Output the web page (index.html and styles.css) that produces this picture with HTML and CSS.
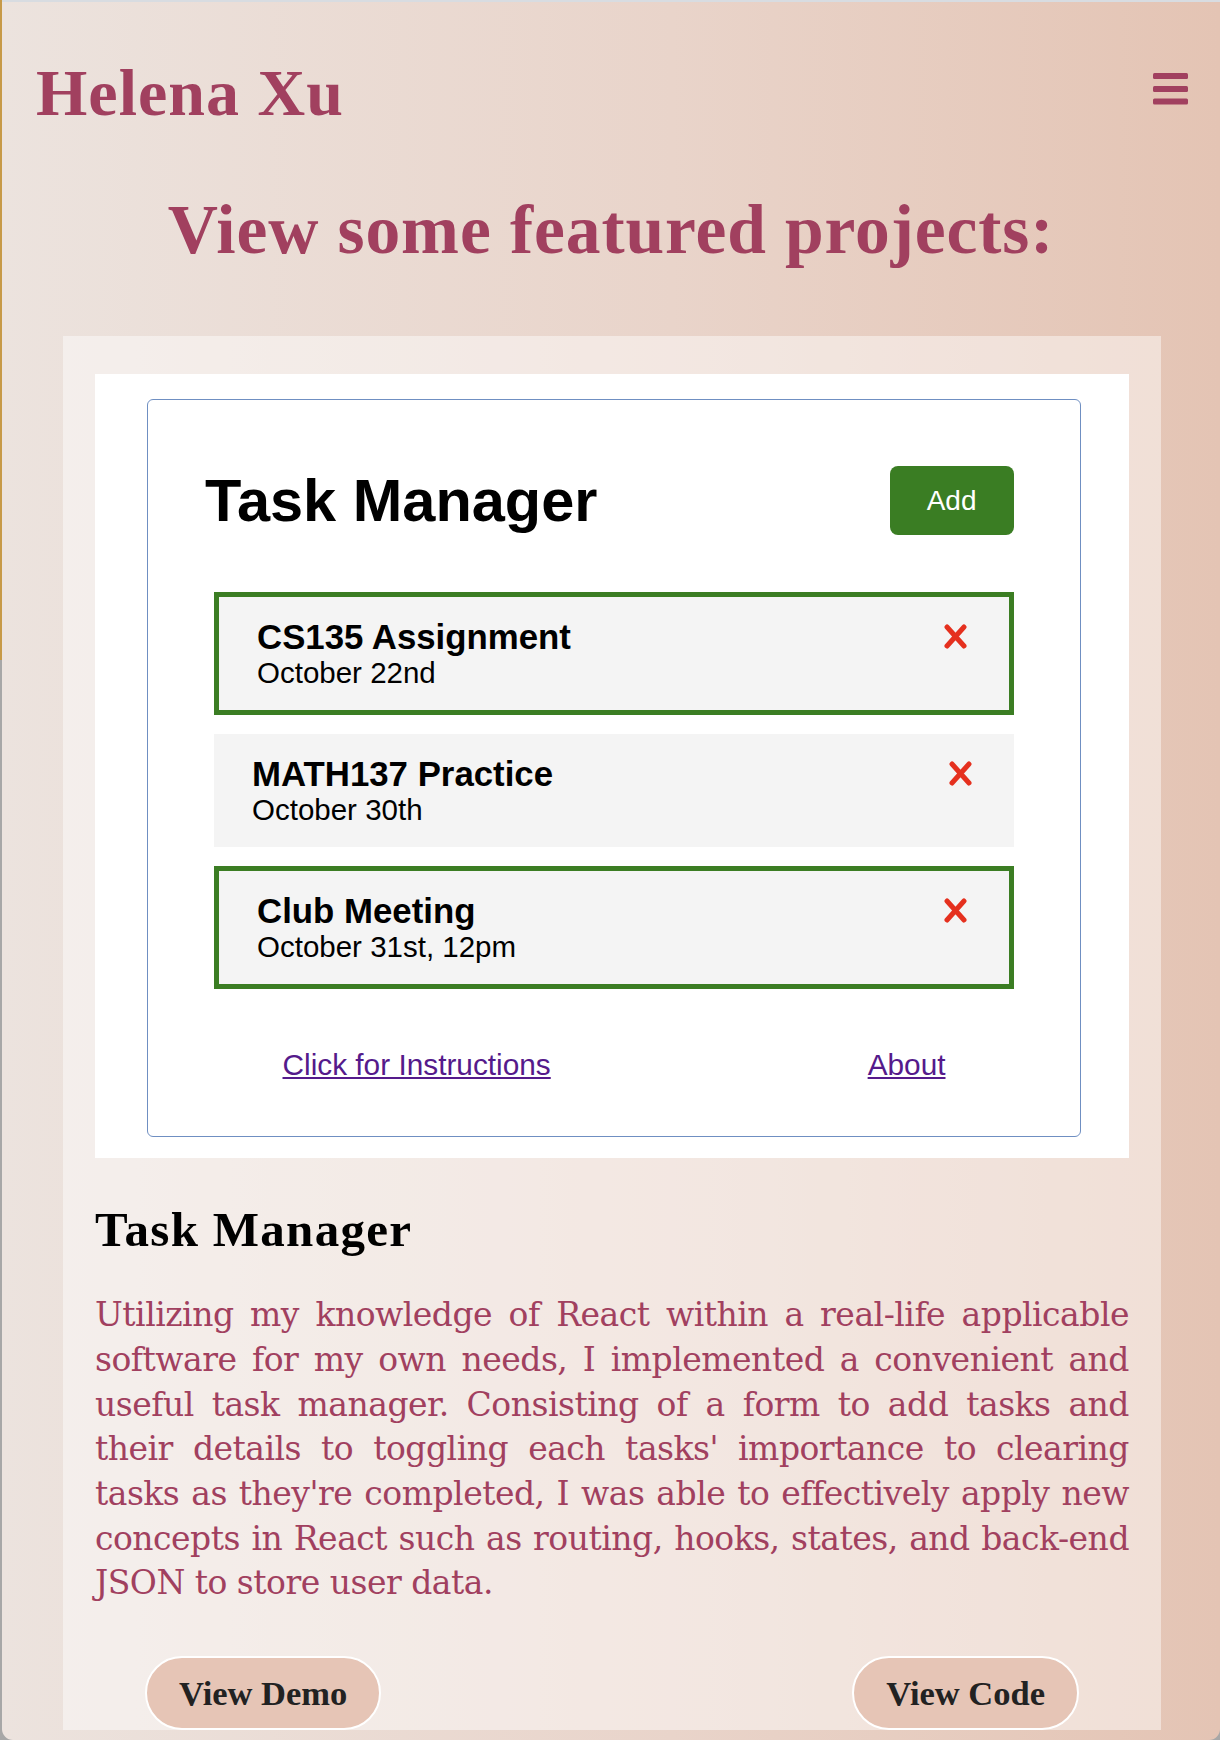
FILE: index.html
```html
<!DOCTYPE html>
<html lang="en">
<head>
<meta charset="utf-8">
<title>Helena Xu</title>
<link rel="stylesheet" href="styles.css">
</head>
<body>
<div class="window">
  <header class="site-header">
    <h1 class="logo">Helena Xu</h1>
    <button class="menu-btn" aria-label="Menu">
      <svg width="35" height="32" viewBox="0 0 35 32"><rect x="0" y="0" width="35" height="6" rx="1.5"/><rect x="0" y="13" width="35" height="6" rx="1.5"/><rect x="0" y="25.5" width="35" height="6" rx="1.5"/></svg>
    </button>
  </header>
  <main>
    <h2 class="section-title">View some featured projects:</h2>
    <article class="project-card">
      <div class="preview">
        <div class="tm-app">
          <div class="tm-header">
            <h3 class="tm-title">Task Manager</h3>
            <button class="tm-add">Add</button>
          </div>
          <ul class="tm-list">
            <li class="tm-task tm-task--reminder">
              <div class="tm-task-text"><div class="tm-task-title">CS135 Assignment</div><div class="tm-task-date">October 22nd</div></div>
              <svg class="tm-del" width="23" height="25" viewBox="0 0 23 25"><path d="M3 3L20 22M20 3L3 22"/></svg>
            </li>
            <li class="tm-task">
              <div class="tm-task-text"><div class="tm-task-title">MATH137 Practice</div><div class="tm-task-date">October 30th</div></div>
              <svg class="tm-del" width="23" height="25" viewBox="0 0 23 25"><path d="M3 3L20 22M20 3L3 22"/></svg>
            </li>
            <li class="tm-task tm-task--reminder">
              <div class="tm-task-text"><div class="tm-task-title">Club Meeting</div><div class="tm-task-date">October 31st, 12pm</div></div>
              <svg class="tm-del" width="23" height="25" viewBox="0 0 23 25"><path d="M3 3L20 22M20 3L3 22"/></svg>
            </li>
          </ul>
          <div class="tm-links">
            <a href="#instructions">Click for Instructions</a>
            <a href="#about">About</a>
          </div>
        </div>
      </div>
      <h3 class="project-title">Task Manager</h3>
      <p class="project-desc">Utilizing my knowledge of React within a real-life applicable software for my own needs, I implemented a convenient and useful task manager. Consisting of a form to add tasks and their details to toggling each tasks' importance to clearing tasks as they're completed, I was able to effectively apply new concepts in React such as routing, hooks, states, and back-end JSON to store user data.</p>
      <div class="project-actions">
        <a class="pill" href="#demo">View Demo</a>
        <a class="pill" href="#code">View Code</a>
      </div>
    </article>
  </main>
</div>
</body>
</html>
```

FILE: styles.css
```css
html {
  background: linear-gradient(to bottom, #c79a48 0, #c79a48 660px, #a7a7a7 660px);
}
body {
  margin: 0;
}
.window {
  margin-left: 2px;
  height: 100vh;
  box-sizing: border-box;
  border-top: 2px solid #d8dce1;
  background: linear-gradient(90deg, #ece3de 0%, #e9d4ca 55%, #e4c4b4 100%);
  border-radius: 0 0 11px 11px;
  overflow: hidden;
  font-family: "Liberation Serif", "Times New Roman", serif;
}
.site-header {
  display: flex;
  justify-content: space-between;
  align-items: center;
  padding: 52.5px 32px 0 34px;
}
.logo {
  margin: 0;
  font-size: 66px;
  font-weight: 700;
  line-height: normal;
  letter-spacing: 1px;
  color: #a1405f;
}
.menu-btn {
  display: flex;
  border: 0;
  background: none;
  padding: 0;
  margin-bottom: 7px;
  fill: #a1405f;
}
.section-title {
  margin: 59px 0 0;
  text-align: center;
  font-size: 69.5px;
  font-weight: 700;
  line-height: normal;
  letter-spacing: 0.9px;
  color: #a1405f;
}
.project-card {
  margin: 66.5px 59px 0 61px;
  padding: 38px 32px 0;
  background: rgba(255, 255, 255, 0.45);
}
.preview {
  background: #fff;
  padding: 25px 48px 21px 52px;
}
.tm-app {
  border: 1.5px solid #6f8fc2;
  border-radius: 6px;
  padding: 65.5px 66.5px 55px 65.5px;
  font-family: "Liberation Sans", Arial, sans-serif;
  color: #000;
}
.tm-header {
  display: flex;
  justify-content: space-between;
  align-items: center;
  margin-left: -8.5px;
}
.tm-title {
  margin: 0;
  font-size: 59.5px;
  font-weight: 700;
  line-height: normal;
}
.tm-add {
  border: 0;
  border-radius: 8px;
  background: #3a7d23;
  color: #fff;
  font-family: "Liberation Sans", Arial, sans-serif;
  font-size: 28px;
  line-height: 33px;
  padding: 18px 37px;
}
.tm-list {
  list-style: none;
  margin: 57px 0 0;
  padding: 0;
  display: flex;
  flex-direction: column;
  gap: 19px;
}
.tm-task {
  display: flex;
  justify-content: space-between;
  align-items: flex-start;
  box-sizing: border-box;
  background: #f4f4f4;
  padding: 20px 42px 20px 38.5px;
}
.tm-task--reminder {
  border: 5px solid #3b7d23;
}
.tm-task-title {
  font-size: 34.8px;
  font-weight: 700;
  line-height: 39px;
}
.tm-task-date {
  font-size: 29.5px;
  line-height: normal;
}
.tm-del {
  flex: none;
  margin-top: 7px;
  fill: none;
  stroke: #e5301e;
  stroke-width: 5;
  stroke-linecap: round;
}
.tm-links {
  display: flex;
  justify-content: space-between;
  margin-top: 59px;
  padding: 0 68px 0 69px;
  font-size: 29.8px;
  line-height: 33px;
}
.tm-links a {
  color: #551a8b;
  text-decoration: underline;
}
.project-title {
  margin: 43px 0 0;
  font-size: 49px;
  font-weight: 700;
  line-height: normal;
  letter-spacing: 1.3px;
  color: #000;
}
.project-desc {
  margin: 35.6px 0 0;
  font-family: "DejaVu Serif", serif;
  font-size: 33px;
  line-height: 44.7px;
  letter-spacing: -0.5px;
  color: #a1405f;
  text-align: justify;
}
.project-actions {
  display: flex;
  justify-content: space-between;
  padding: 0 50px;
  margin-top: 50px;
}
.pill {
  display: inline-block;
  background: #e6c5b6;
  border: 2px solid #fff;
  border-radius: 999px;
  padding: 15.5px 32px;
  font-size: 34.5px;
  font-weight: 700;
  line-height: 39px;
  color: #222;
  text-decoration: none;
}
```
